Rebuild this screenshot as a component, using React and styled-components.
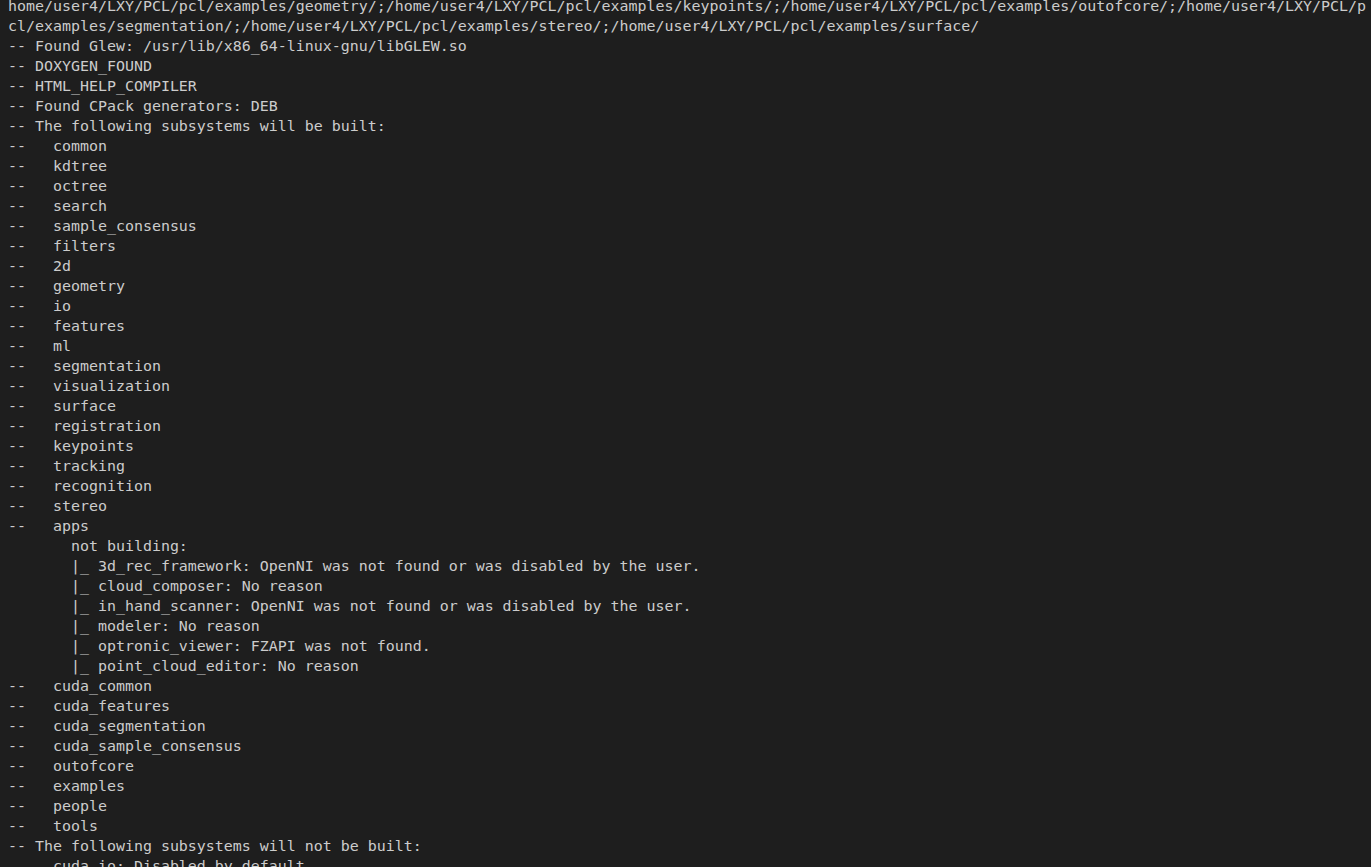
import React from "react";
import styled, { createGlobalStyle } from "styled-components";

const GlobalStyle = createGlobalStyle`
  html, body {
    margin: 0;
    padding: 0;
    background: #1e1e1e;
    overflow: hidden;
  }
`;

const Terminal = styled.div`
  width: 1371px;
  height: 867px;
  overflow: hidden;
  background: #1e1e1e;
  box-sizing: border-box;
  padding: 0 0 0 8px;
`;

const Output = styled.div`
  margin-top: -4px;
  display: flex;
  flex-direction: column;
`;

const Line = styled.div`
  height: 20px;
  line-height: 20px;
  font-family: "DejaVu Sans Mono", "Liberation Mono", monospace;
  font-size: 14.95px;
  color: #cccccc;
  white-space: pre;
`;

const lines = [
  "home/user4/LXY/PCL/pcl/examples/geometry/;/home/user4/LXY/PCL/pcl/examples/keypoints/;/home/user4/LXY/PCL/pcl/examples/outofcore/;/home/user4/LXY/PCL/p",
  "cl/examples/segmentation/;/home/user4/LXY/PCL/pcl/examples/stereo/;/home/user4/LXY/PCL/pcl/examples/surface/",
  "-- Found Glew: /usr/lib/x86_64-linux-gnu/libGLEW.so",
  "-- DOXYGEN_FOUND",
  "-- HTML_HELP_COMPILER",
  "-- Found CPack generators: DEB",
  "-- The following subsystems will be built:",
  "--   common",
  "--   kdtree",
  "--   octree",
  "--   search",
  "--   sample_consensus",
  "--   filters",
  "--   2d",
  "--   geometry",
  "--   io",
  "--   features",
  "--   ml",
  "--   segmentation",
  "--   visualization",
  "--   surface",
  "--   registration",
  "--   keypoints",
  "--   tracking",
  "--   recognition",
  "--   stereo",
  "--   apps",
  "       not building:",
  "       |_ 3d_rec_framework: OpenNI was not found or was disabled by the user.",
  "       |_ cloud_composer: No reason",
  "       |_ in_hand_scanner: OpenNI was not found or was disabled by the user.",
  "       |_ modeler: No reason",
  "       |_ optronic_viewer: FZAPI was not found.",
  "       |_ point_cloud_editor: No reason",
  "--   cuda_common",
  "--   cuda_features",
  "--   cuda_segmentation",
  "--   cuda_sample_consensus",
  "--   outofcore",
  "--   examples",
  "--   people",
  "--   tools",
  "-- The following subsystems will not be built:",
  "     cuda_io: Disabled by default",
];

export default function App() {
  return (
    <>
      <GlobalStyle />
      <Terminal>
        <Output>
          {lines.map((text, i) => (
            <Line key={i}>{text}</Line>
          ))}
        </Output>
      </Terminal>
    </>
  );
}
